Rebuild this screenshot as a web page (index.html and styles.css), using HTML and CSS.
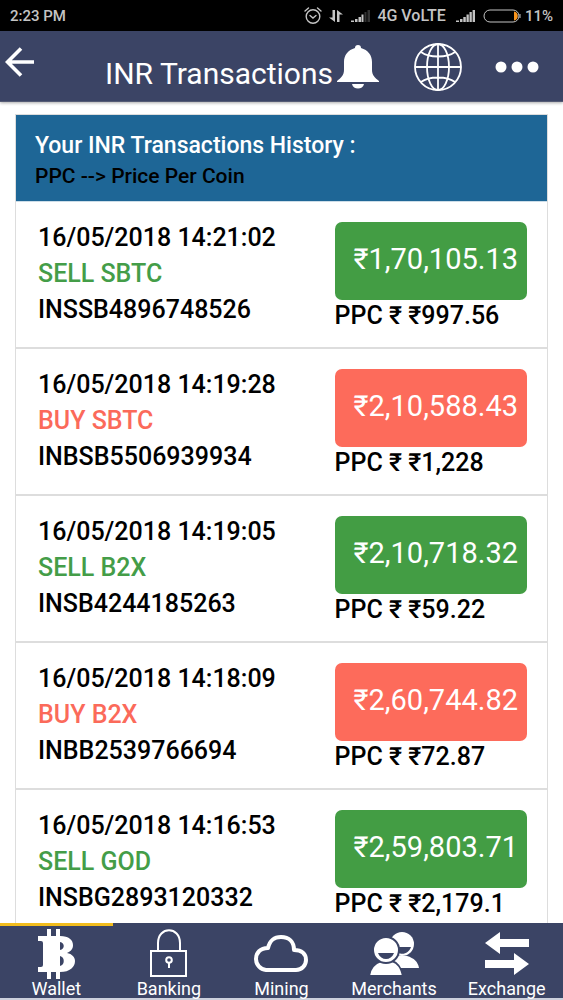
FILE: index.html
```html
<!DOCTYPE html>
<html lang="en">
<head>
<meta charset="utf-8">
<meta name="viewport" content="width=device-width, initial-scale=1">
<title>INR Transactions</title>
<link rel="stylesheet" href="styles.css">
</head>
<body>
<div class="app">
  <div class="status">
    <span class="time">2:23 PM</span>
    <svg class="alarm" width="18" height="18" viewBox="0 0 18 18" fill="none" stroke="#c4c4c4" stroke-width="1.4" stroke-linecap="round"><circle cx="9" cy="9.5" r="6.8"/><path d="M1 4 4.500 1M17 4 13.500 1M6 8.500 9 11l3-2.500"/></svg>
    <svg class="data" width="14" height="14" viewBox="0 0 14 14" fill="#c4c4c4"><path d="M3.500 1h2.500v12L0 8.500h3.500zM8 13h2.500V5.500H14L8 1z"/></svg>
    <svg class="signal" width="19" height="14" viewBox="0 0 19 14" fill="#c4c4c4"><path d="M0 11.500h3V13H0zM4 10h2.500v3H4zM7.500 8H10v5H7.500zM10.500 5.500h2V13h-2z"/><path fill="#333" d="M13.500 3h2v10h-2zM16.500 1H19v12h-2.500z"/></svg>
    <span class="net">4G VoLTE</span>
    <svg class="signal2" width="19" height="14" viewBox="0 0 19 14" fill="#c4c4c4"><path d="M0 11.500h3V13H0zM4 10h2.500v3H4zM7.300 8h2.500v5H7.300zM10.500 5.500h2.300V13h-2.300zM13.500 3h2.300v10h-2.300zM16.600 1H19v12h-2.400z"/></svg>
    <svg class="battery" width="38" height="14" viewBox="0 0 38 14"><rect x="1" y="1" width="35" height="12" rx="6" fill="none" stroke="#c4c4c4"/><path d="M31 2.500c5 0 5 9 0 9z" fill="#f7941d"/><path d="M37 5v4" stroke="#c4c4c4"/></svg>
    <span>11%</span>
  </div>
  <header class="bar">
    <button class="icon back" aria-label="Back"><svg width="30" height="30" viewBox="0 0 30 30" fill="none" stroke="#fff" stroke-width="3.600"><path d="M29 15H3M16 1.500 2.500 15 16 28.500"/></svg></button>
    <h1>INR Transactions</h1>
    <button class="icon bell" aria-label="Notifications"><svg width="42" height="44" viewBox="0 0 42 44" fill="#fff"><path d="M18 3a3 3 0 0 1 6 0c7 2 11 7 11 14v8c0 5 3 8 7 11v1H0v-1c4-3 7-6 7-11v-8C7 10 11 5 18 3zM15 39h12c-1 6-11 6-12 0z"/></svg></button>
    <button class="icon globe" aria-label="Language"><svg width="48" height="48" viewBox="0 0 48 48" fill="none" stroke="#fff" stroke-width="1.800"><circle cx="24" cy="24" r="23"/><ellipse cx="24" cy="24" rx="11" ry="23"/><path d="M24 1v46M1 24h46M7 9c8 6 26 6 34 0M7 39c8-6 26-6 34 0"/></svg></button>
    <button class="icon more" aria-label="More"><svg width="44" height="12" viewBox="0 0 44 12" fill="#fff"><circle cx="6" cy="6" r="5.500"/><circle cx="22" cy="6" r="5.500"/><circle cx="38" cy="6" r="5.500"/></svg></button>
  </header>
  <main class="content">
    <section class="card">
      <div class="intro"><h2>Your INR Transactions History :</h2><p>PPC --&gt; Price Per Coin</p></div>
      <ul class="list">
        <li class="row sell"><div class="info"><p>16/05/2018 14:21:02</p><p class="kind">SELL SBTC</p><p>INSSB4896748526</p></div><div class="value"><p class="amount">₹1,70,105.13</p><p class="ppc">PPC ₹ ₹997.56</p></div></li>
        <li class="row buy"><div class="info"><p>16/05/2018 14:19:28</p><p class="kind">BUY SBTC</p><p>INBSB5506939934</p></div><div class="value"><p class="amount">₹2,10,588.43</p><p class="ppc">PPC ₹ ₹1,228</p></div></li>
        <li class="row sell"><div class="info"><p>16/05/2018 14:19:05</p><p class="kind">SELL B2X</p><p>INSB4244185263</p></div><div class="value"><p class="amount">₹2,10,718.32</p><p class="ppc">PPC ₹ ₹59.22</p></div></li>
        <li class="row buy"><div class="info"><p>16/05/2018 14:18:09</p><p class="kind">BUY B2X</p><p>INBB2539766694</p></div><div class="value"><p class="amount">₹2,60,744.82</p><p class="ppc">PPC ₹ ₹72.87</p></div></li>
        <li class="row sell"><div class="info"><p>16/05/2018 14:16:53</p><p class="kind">SELL GOD</p><p>INSBG2893120332</p></div><div class="value"><p class="amount">₹2,59,803.71</p><p class="ppc">PPC ₹ ₹2,179.1</p></div></li>
      </ul>
    </section>
  </main>
  <nav class="tabs">
    <a class="tab active" href="#wallet"><svg width="38" height="52" viewBox="0 0 38 52"><path fill="#fff" fill-rule="evenodd" d="M1 9h9V2h4v7h5V2h4v7c9 0 13 4 13 9 0 4-2 6-6 8 5 1 8 4 8 8 0 6-5 11-15 11v7h-4v-7h-5v7h-4v-7H1v-5h3q2 0 2-2V16q0-2-2-2H1zM23 15v8c5-1 5-7 0-8zM23 29v10c5-1 5-9 0-10z"/></svg><span>Wallet</span></a>
    <a class="tab" href="#banking"><svg width="38" height="52" viewBox="0 0 38 52" fill="none" stroke="#fff" stroke-width="2"><path d="M8 24V16c0-17 22-17 22 0v8M1 24h35v25H1z"/><circle cx="19" cy="33" r="2.800"/><path d="M19 36v5"/></svg><span>Banking</span></a>
    <a class="tab" href="#mining"><svg width="56" height="52" viewBox="0 0 56 52" fill="none" stroke="#fff" stroke-width="4" stroke-linejoin="round"><path d="M13 43A11 11 0 0 1 3 32C3 26 7 21 15 21 17 13 21 10 28 10c8 0 13 5 13 13 8 0 12 4 12 10 0 5-4 10-10 10z"/></svg><span>Mining</span></a>
    <a class="tab" href="#merchants"><svg width="52" height="52" viewBox="0 0 52 52"><g fill="#fff"><circle cx="34" cy="17" r="12"/><path d="M22 41c0-8 4-11 9-12h8c7 2 11 6 12 12z"/></g><path fill="#3b4465" d="M25 20h18c-3 9-14 9-18 0z"/><g fill="#fff" stroke="#3b4465" stroke-width="2"><path d="M1 49c1-9 6-13 12-15h11c6 2 9 6 11 15z"/><circle cx="18" cy="23" r="13"/></g><path fill="#3b4465" d="M10 26h16c-3 8-13 8-16 0z"/></svg><span>Merchants</span></a>
    <a class="tab" href="#exchange"><svg width="44" height="52" viewBox="0 0 44 52" fill="#fff"><path d="M0 16 15 5v7h29v8H15v7zM44 37 29 26v7H0v8h29v7z"/></svg><span>Exchange</span></a>
  </nav>
</div>
</body>
</html>
```

FILE: styles.css
```css
* { box-sizing: border-box; }
body { margin: 0; font-family: Roboto, "Noto Sans", sans-serif; background: #fff; color: #000; }
h1, h2, p, ul { margin: 0; padding: 0; }
svg { display: block; flex: none; }
.app { height: 100vh; display: flex; flex-direction: column; }
.status { flex: none; height: 31px; padding: 0 10px; display: flex; align-items: center; background: #000; color: #c4c4c4; font-size: 15px; font-weight: 500; white-space: nowrap; }
.time { margin-right: auto; }
.alarm { margin-right: 7px; }
.data { margin-right: 8px; }
.signal { margin-right: 7px; }
.net { font-size: 16px; }
.signal2 { margin: 0 8px 0 10px; }
.battery { margin-right: 4px; }
.bar { flex: none; height: 71px; padding: 2px 24px 0 5px; display: flex; align-items: center; background: #3b4465; border-bottom: 1px solid #555b75; box-shadow: 0 1px 3px #0005; z-index: 1; }
.icon { flex: none; padding: 0; border: 0; background: none; }
.back { padding-bottom: 11px; }
.bar h1 { margin-left: auto; padding-top: 13px; color: #fff; font-size: 30px; line-height: 36px; font-weight: 400; white-space: nowrap; }
.bell { margin: 0 35px 0 4px; }
.globe { margin-right: 33px; }
.content { flex: 1; min-height: 0; overflow: auto; scrollbar-width: none; padding: 12px 15px 0; }
.card { border: 1px solid #ddd; }
.intro { padding: 16px 19px 10px; background: #1e6696; border-bottom: 1px solid #ccdde8; }
.intro h2 { color: #fff; font-size: 23px; line-height: 30px; font-weight: 500; }
.intro p { font-size: 21px; line-height: 30px; font-weight: 500; }
.list { list-style: none; }
.row { display: flex; justify-content: space-between; padding: 18px 20px 15px 22px; border-bottom: 2px solid #ddd; font-size: 25px; font-weight: 500; white-space: nowrap; }
.info p { line-height: 36px; }
.value { padding-top: 2px; }
.amount { min-width: 192px; padding: 19px 9px 23px 19px; border-radius: 7px; color: #fff; font-size: 29px; line-height: 36px; font-weight: 400; }
.ppc { line-height: 32px; }
.sell .kind { color: #449d48; }
.buy .kind { color: #fb6a5a; }
.sell .amount { background: #439d44; }
.buy .amount { background: #fd6b5b; }
.tabs { flex: none; display: grid; grid-template-columns: repeat(5, 1fr); background: #3b4465; border-bottom: 2px solid #ccd0dc; }
.tab { display: flex; flex-direction: column; align-items: center; padding-top: 1px; border-top: 3px solid transparent; color: #fff; font-size: 18px; line-height: 19px; text-decoration: none; }
.tab.active { border-top-color: #f2bd1d; }
```
